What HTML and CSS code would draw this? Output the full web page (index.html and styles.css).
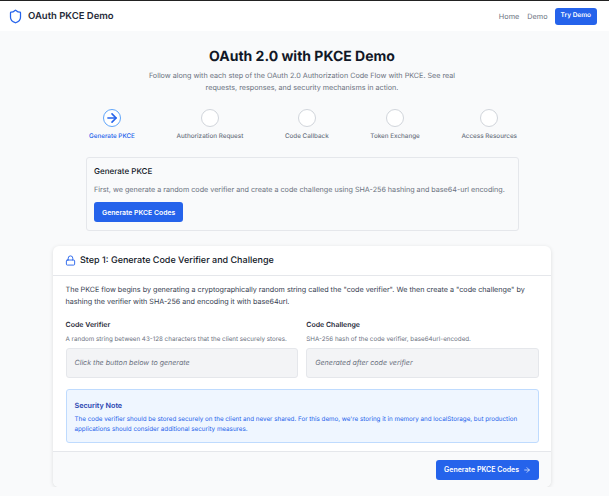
FILE: index.html
```html
<!DOCTYPE html>
<html>
<head>
    <title>OAuth PKCE Demo</title>
    <meta name="viewport" content="width=device-width, initial-scale=1.0">
    <link rel="stylesheet" href="styles.css">
</head>
<body>
    <nav class="navbar">
        <div class="brand">
            <svg class="brand-icon" viewBox="0 0 24 24" fill="none" stroke="#2563eb" stroke-width="2" stroke-linecap="round" stroke-linejoin="round"><path d="M20 13c0 5-3.5 7.5-7.66 8.95a1 1 0 0 1-.67-.01C7.5 20.5 4 18 4 13V6a1 1 0 0 1 1-1c2 0 4.500-1.200 6.240-2.720a1.170 1.170 0 0 1 1.520 0C14.510 3.810 17 5 19 5a1 1 0 0 1 1 1z"/></svg>
            <span>OAuth PKCE Demo</span>
        </div>
        <div class="nav-links">
            <a>Home</a>
            <a>Demo</a>
            <a class="nav-btn">Try Demo</a>
        </div>
    </nav>
    <main class="page">
        <h1>OAuth 2.0 with PKCE Demo</h1>
        <p class="lead">Follow along with each step of the OAuth 2.0 Authorization Code Flow with PKCE. See real requests, responses, and security mechanisms in action.</p>

        <div class="stepper">
            <div class="step active">
                <div class="step-circle">
                    <svg viewBox="0 0 24 24" fill="none" stroke="#2563eb" stroke-width="2.800" stroke-linecap="round" stroke-linejoin="round"><path d="M5 12h14"/><path d="m12 5 7 7-7 7"/></svg>
                </div>
                <span>Generate PKCE</span>
            </div>
            <div class="step"><div class="step-circle"></div><span>Authorization Request</span></div>
            <div class="step"><div class="step-circle"></div><span>Code Callback</span></div>
            <div class="step"><div class="step-circle"></div><span>Token Exchange</span></div>
            <div class="step"><div class="step-circle"></div><span>Access Resources</span></div>
        </div>

        <div class="intro-box">
            <h3>Generate PKCE</h3>
            <p>First, we generate a random code verifier and create a code challenge using SHA-256 hashing and base64-url encoding.</p>
            <button class="btn">Generate PKCE Codes</button>
        </div>

        <section class="card">
            <div class="card-header">
                <svg viewBox="0 0 24 24" fill="none" stroke="#2563eb" stroke-width="2" stroke-linecap="round" stroke-linejoin="round"><rect x="3" y="11" width="18" height="11" rx="2" ry="2"/><path d="M7 11V7a5 5 0 0 1 10 0v4"/></svg>
                <h2>Step 1: Generate Code Verifier and Challenge</h2>
            </div>
            <div class="card-body">
                <p class="desc">The PKCE flow begins by generating a cryptographically random string called the "code verifier". We then create a "code challenge" by hashing the verifier with SHA-256 and encoding it with base64url.</p>
                <div class="fields">
                    <div class="field">
                        <label>Code Verifier</label>
                        <small>A random string between 43-128 characters that the client securely stores.</small>
                        <div class="fake-input">Click the button below to generate</div>
                    </div>
                    <div class="field">
                        <label>Code Challenge</label>
                        <small>SHA-256 hash of the code verifier, base64url-encoded.</small>
                        <div class="fake-input">Generated after code verifier</div>
                    </div>
                </div>
                <div class="note">
                    <h4>Security Note</h4>
                    <p>The code verifier should be stored securely on the client and never shared. For this demo, we're storing it in memory and localStorage, but production applications should consider additional security measures.</p>
                </div>
            </div>
            <div class="card-footer">
                <button class="btn btn-next">Generate PKCE Codes
                    <svg viewBox="0 0 24 24" fill="none" stroke="currentColor" stroke-width="2" stroke-linecap="round" stroke-linejoin="round"><path d="M5 12h14"/><path d="m12 5 7 7-7 7"/></svg>
                </button>
            </div>
        </section>
    </main>
</body>
</html>
```

FILE: styles.css
```css
* {
    box-sizing: border-box;
}
body {
    font-family: Inter, "Noto Sans", sans-serif;
    margin: 0;
    background-color: #f9fafb;
    color: #111827;
    border-top: 1px solid #222;
    text-rendering: geometricPrecision;
}
.navbar {
    display: flex;
    justify-content: space-between;
    align-items: center;
    height: 30px;
    padding: 0 12px 0 8px;
    background-color: #fff;
}
.brand {
    display: flex;
    align-items: center;
    gap: 5px;
    font-size: 9.500px;
    font-weight: 600;
    color: #1f2937;
}
.brand-icon {
    width: 15px;
    height: 15px;
}
.nav-links {
    display: flex;
    align-items: center;
    gap: 8px;
    font-size: 7.300px;
    color: #6b7280;
}
.nav-btn {
    height: 17px;
    margin-left: -1px;
    padding: 3px 6px 0;
    background-color: #2563eb;
    color: #fff;
    border-radius: 3px;
    font-weight: 600;
    font-size: 6.500px;
    line-height: 9px;
}
.page {
    padding: 16px 5px 0 0;
}
h1 {
    margin: 0 0 3px;
    font-size: 14px;
    line-height: 20px;
    font-weight: 700;
    text-align: center;
}
.lead {
    width: 320px;
    margin: 0 auto 15px;
    font-size: 7.200px;
    line-height: 12px;
    color: #6b7280;
    text-align: center;
}
.stepper {
    display: flex;
    justify-content: space-between;
    width: 428px;
    margin: 0 0 17px 89px;
}
.step {
    display: flex;
    flex-direction: column;
    align-items: center;
    gap: 5px;
    font-size: 6.300px;
    line-height: 8px;
    font-weight: 500;
    color: #6b7280;
}
.step-circle {
    display: flex;
    justify-content: center;
    align-items: center;
    width: 18px;
    height: 18px;
    border: 1.500px solid #d1d5db;
    border-radius: 50%;
    background-color: #fff;
}
.step-circle svg {
    width: 14px;
    height: 14px;
}
.step.active {
    color: #2563eb;
}
.step.active .step-circle {
    border-color: #60a5fa;
}
.intro-box {
    width: 433px;
    height: 74px;
    margin: 0 auto 15px;
    padding: 7px 7.500px;
    border: 1.300px solid #e5e7eb;
    border-radius: 3px;
    background-color: #f9fafb;
}
.intro-box h3 {
    margin: 0 0 6.500px;
    font-size: 8px;
    line-height: 12px;
    font-weight: 500;
}
.intro-box p {
    margin: 0 0 7.500px;
    font-size: 7.200px;
    line-height: 11px;
    color: #6b7280;
}
.btn {
    display: flex;
    align-items: center;
    height: 20px;
    padding: 0 8px;
    border: none;
    border-radius: 3px;
    background-color: #2563eb;
    color: #fff;
    font-family: inherit;
    font-size: 6.850px;
    font-weight: 600;
}
.card {
    width: 498px;
    margin: 0 auto;
    border-radius: 6px;
    background-color: #fff;
    box-shadow: 0 1px 4px rgba(0, 0, 0, 0.12);
    overflow: hidden;
}
.card-header {
    display: flex;
    align-items: center;
    gap: 4px;
    height: 30px;
    padding: 0 12px;
    border-bottom: 1.300px solid #e5e7eb;
}
.card-header svg {
    width: 11px;
    height: 11px;
}
.card-header h2 {
    margin: 0;
    font-size: 9px;
    font-weight: 500;
}
.card-body {
    padding: 8px 12px 8px 12.500px;
}
.desc {
    margin: 0 0 12px;
    font-size: 7.200px;
    line-height: 12px;
    color: #374151;
}
.fields {
    display: grid;
    grid-template-columns: 1fr 1fr;
    gap: 8px;
    margin-bottom: 11px;
}
.field label {
    display: block;
    font-size: 7px;
    line-height: 10px;
    font-weight: 600;
    color: #1f2937;
}
.field small {
    display: block;
    margin: 4.500px 0 4px;
    font-size: 6.250px;
    line-height: 9px;
    color: #6b7280;
}
.fake-input {
    height: 30px;
    padding: 0 8px;
    border: 1.300px solid #e5e7eb;
    border-radius: 3px;
    background-color: #f3f4f6;
    font-size: 7.100px;
    line-height: 28px;
    font-style: italic;
    color: #6b7280;
}
.note {
    height: 54px;
    padding: 10px 8px;
    border: 1.300px solid #bfdbfe;
    border-radius: 3px;
    background-color: #eff6ff;
}
.note h4 {
    margin: 0 0 3px;
    font-size: 7.200px;
    line-height: 11px;
    font-weight: 600;
    color: #1e40af;
}
.note p {
    margin: 0;
    font-size: 6.250px;
    line-height: 10px;
    color: #2563eb;
}
.card-footer {
    display: flex;
    justify-content: flex-end;
    height: 36px;
    padding: 8px 12px 0;
    border-top: 1.300px solid #e5e7eb;
    background-color: #f9fafb;
}
.btn-next {
    height: 20px;
    font-size: 7px;
}
.btn-next svg {
    width: 8px;
    height: 8px;
    margin-left: 4px;
}
```
